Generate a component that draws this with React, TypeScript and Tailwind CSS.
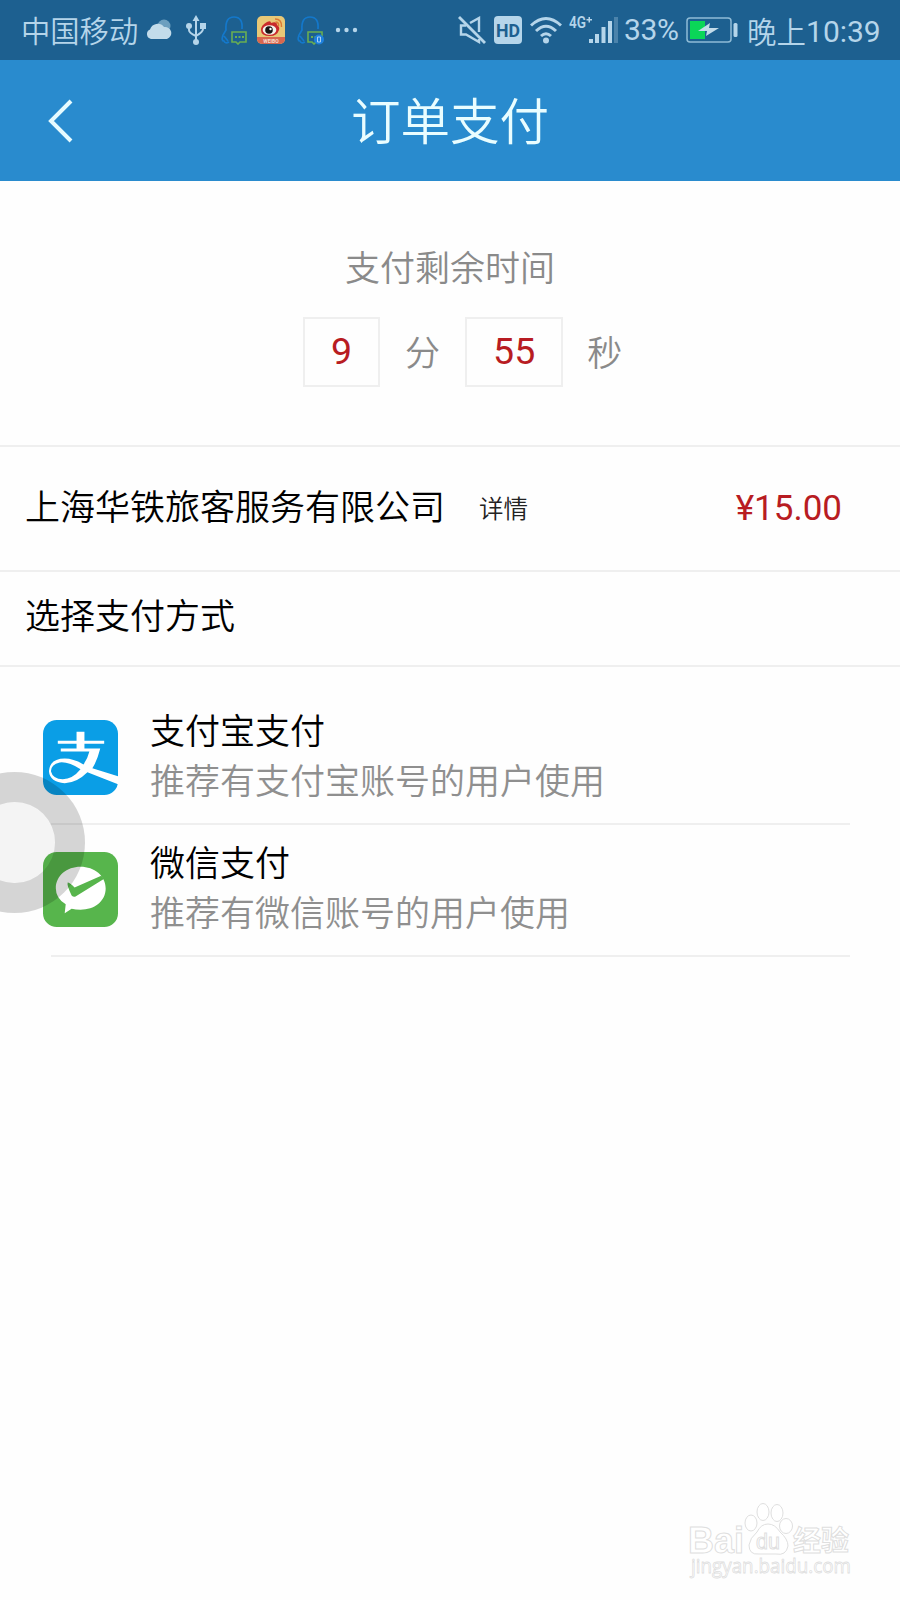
import type { ReactNode } from "react";

const StatusBar = () => {
  return (
    <div className="flex h-[60px] items-center bg-[#1d6090] text-[#b5d5ea]">
      <span className="ml-[21px] w-[118px] whitespace-nowrap text-[29.3px] leading-none font-[350]">
        中国移动
      </span>
      <svg className="ml-[7px]" width="26" height="22" viewBox="0 0 26 22">
        <circle cx="18" cy="7" r="6.500" fill="#6c9fbf" />
        <path
          d="M5 20a5 5 0 0 1-1-9.500a8 8 0 0 1 14-2.500a6.200 6.200 0 0 1 3 12z"
          fill="#c3dcea"
        />
      </svg>
      <svg className="ml-[14px]" width="20" height="30" viewBox="0 0 20 30">
        <g fill="none" stroke="#b5d5ea" strokeWidth="2">
          <path d="M10 4v22M3 11v4q0 3 7 6M17 11v3q0 3-7 7" />
        </g>
        <g fill="#b5d5ea">
          <path d="M10 0l3.500 6h-7zM14 8h6v6h-6z" />
          <circle cx="3" cy="11" r="3" />
          <circle cx="10" cy="27" r="3" />
        </g>
      </svg>
      <QQIcon className="ml-[15px]" />
      <svg className="ml-[9px]" width="28" height="28" viewBox="0 0 28 28">
        <rect width="28" height="28" rx="5" fill="#e8c877" />
        <path d="M0 21h28v2a5 5 0 0 1-5 5H5a5 5 0 0 1-5-5z" fill="#d8674f" />
        <path
          d="M4 14q0-5 6-8q4-2 4 1q6-2 6 2q3 2 2 5q-2 6-9 6q-9 0-9-6z"
          fill="#c92b2b"
        />
        <ellipse cx="12.500" cy="14" rx="6.800" ry="4.800" fill="#f5f2ea" />
        <circle cx="12" cy="14" r="3.800" fill="#151515" />
        <circle cx="13.500" cy="13" r="1.200" fill="#fff" />
        <path
          d="M18 3q7 0 6.500 8M18.500 6q3.500 0 3 4"
          fill="none"
          stroke="#dc7a35"
          strokeWidth="1.500"
        />
        <text
          className="font-[Roboto]"
          x="14"
          y="26.500"
          fontSize="5"
          fontWeight="700"
          textAnchor="middle"
          fill="#f6dcd0"
        >
          WEIBO
        </text>
      </svg>
      <QQIcon className="ml-[12px]" badge />
      <svg className="ml-[11px]" width="23" height="6" viewBox="0 0 23 6" fill="#b5d5ea">
        <circle cx="3" cy="3" r="2.200" />
        <circle cx="11.500" cy="3" r="2.200" />
        <circle cx="20" cy="3" r="2.200" />
      </svg>

      <div className="ml-auto flex h-full items-center">
        <svg width="28" height="28" viewBox="0 0 28 28" fill="none" stroke="#b5d5ea" strokeWidth="2.400">
          <path d="M1 1l26 26" strokeWidth="2.800" />
          <path d="M8 9.500H3v9h5l13 7.500v-3M12 7l9-5v14" />
        </svg>
        <svg className="ml-[8px]" width="28" height="28" viewBox="0 0 28 28">
          <rect width="28" height="28" rx="4" fill="#b5d5ea" />
          <text
            className="font-[Roboto]"
            x="14"
            y="20.500"
            fontSize="18"
            fontWeight="700"
            textAnchor="middle"
            textLength="24"
            lengthAdjust="spacingAndGlyphs"
            fill="#1d6090"
          >
            HD
          </text>
        </svg>
        <svg className="ml-[8px]" width="32" height="28" viewBox="0 0 32 28">
          <g fill="none" stroke="#b5d5ea" strokeWidth="3">
            <path d="M1 9.500q15-14 30 0M6 15q10-9.500 20 0M11 20q5-4.500 10 0" />
          </g>
          <circle cx="16" cy="24.500" r="3" fill="#b5d5ea" />
        </svg>
        <svg
          className="ml-[7px] overflow-visible"
          width="50"
          height="28"
          viewBox="0 0 50 28"
          fill="#b5d5ea"
        >
          <text
            className="font-[Roboto]"
            x="0"
            y="12"
            fontSize="16"
            fontWeight="600"
            textLength="17"
            lengthAdjust="spacingAndGlyphs"
          >
            4G
          </text>
          <path d="M17.500 3h2v-2h1.500v2h2v1.500h-2v2h-1.500v-2h-2z" />
          <path d="M20 23h4v4h-4zM26 18h4v9h-4zM32.500 11h4v16h-4zM39 5h4v22h-4z" />
          <path d="M45 1h4v26h-4z" opacity=".3" />
        </svg>
        <span className="ml-[5px] w-[54px] font-[Roboto] text-[30px] leading-none tracking-[-0.3px] whitespace-nowrap">
          33%
        </span>
        <svg className="ml-[8px]" width="52" height="26" viewBox="0 0 52 26">
          <rect x="1" y="1" width="44" height="24" rx="3" fill="none" stroke="#8fbbd6" strokeWidth="1.500" />
          <path d="M4 4h15v18H4z" fill="#0bd658" />
          <path d="M12 14l12-8l-1 5h10l-13 8l1-5z" fill="#c3dcea" />
          <rect x="47.500" y="6" width="4" height="14" rx="1.500" fill="#b5d5ea" />
        </svg>
        <span className="mr-[20px] ml-[9px] flex w-[133px] items-center pt-[1px] whitespace-nowrap">
          <span className="text-[29.500px] leading-none font-[350]">晚上</span>
          <span className="pt-[2px] font-[Roboto] text-[30px] leading-none">10:39</span>
        </span>
      </div>
    </div>
  );
};

const QQIcon = ({ className, badge }: { className: string; badge?: boolean }) => {
  return (
    <svg className={className} width="27" height="29" viewBox="0 0 27 29" fill="none">
      <path
        d="M8 26q-4 2-5-1q-3 0-1-6l3-5q-1-13 8-13t8 12M3 20l4 5"
        stroke="#1478cb"
        strokeWidth="1.700"
      />
      <path d="M11 16h14v10h-6l-2 2l-2-2h-4z" stroke="#6aae52" strokeWidth="1.600" />
      <path d="M14 21h2M17.500 21h2M21 21h2" stroke="#6aae52" strokeWidth="2" />
      {badge && (
        <>
          <circle cx="22" cy="23.500" r="5" fill="#1d80df" />
          <path d="M20.500 21h3v5h-3z" stroke="#a8d0f0" />
        </>
      )}
    </svg>
  );
};

const AlipayIcon = () => {
  return (
    <svg width="75" height="75" viewBox="0 0 76 76">
      <rect width="76" height="76" rx="14" fill="#0a9ee6" />
      <path
        d="M34 12h8v9h20v3H42v5h16q-3 12-8 20l26 8v8L45 53Q34 64 22 64Q7 63 6 52Q7 39 22 39q9 0 19 6q4-5 6-13H18v-3h16v-5H15v-3h19zM38 50Q26 42 17 43q-9 2-9 9q2 8 12 8q10 0 18-10z"
        fill="#fff"
        fillRule="evenodd"
      />
    </svg>
  );
};

const WechatIcon = () => {
  return (
    <svg width="75" height="75" viewBox="0 0 76 76">
      <rect width="76" height="76" rx="14" fill="#57b54c" />
      <path
        d="M38 15c14 0 25.500 9 25.500 22S52 58.500 38 58.500q-5 0-9-1l-7 4.500l1-9q-10-6-10-16c0-13 11-22 25-22z"
        fill="#fff"
      />
      <path d="M25 31q2 0 7 5l27-12l3 3l-29 18q-2 1-4-1q-5-10-4-13z" fill="#57b54c" />
    </svg>
  );
};

const PayMethod = ({ icon, name, hint }: { icon: ReactNode; name: string; hint: string }) => {
  return (
    <div className="flex h-[132px]">
      <div className="ml-[43px] pt-[29px]">{icon}</div>
      <div className="ml-[32px] pt-[13px] text-[35px] leading-[50px] font-[350] whitespace-nowrap">
        <p className="text-black">{name}</p>
        <p className="text-[#8f8f8f]">{hint}</p>
      </div>
    </div>
  );
};

const TimeBox = ({ value }: { value: string }) => {
  return (
    <div className="flex h-[70px] items-center justify-center border-2 border-[#efefef] px-[26px] pb-[2px] font-[Roboto] text-[37.500px] font-normal text-[#b81c22]">
      {value}
    </div>
  );
};

const Watermark = () => {
  return (
    <svg
      className="absolute right-[45px] bottom-[13px] overflow-visible font-['Open_Sans']"
      width="170"
      height="84"
      viewBox="0 0 170 84"
      fill="#fff"
      stroke="#dfdfdf"
      strokeWidth="1"
    >
      <text
        className="font-['Liberation_Sans']"
        x="3"
        y="50"
        fontSize="36"
        fontWeight="700"
        textLength="56"
        lengthAdjust="spacingAndGlyphs"
      >
        Bai
      </text>
      <ellipse cx="66" cy="20" rx="6" ry="8" />
      <ellipse cx="78" cy="9" rx="6" ry="8.500" />
      <ellipse cx="92" cy="10" rx="6" ry="8.500" />
      <ellipse cx="101" cy="23" rx="6.500" ry="7.500" />
      <path d="M83 21q7 0 12 8q8 7 8 14q-2 10-12 8h-17q-10 1-10-9q1-7 8-13q4-8 11-8z" />
      <text
        className="font-['Liberation_Sans']"
        x="71"
        y="46"
        fontSize="22"
        textLength="24"
        lengthAdjust="spacingAndGlyphs"
      >
        du
      </text>
      <text className="font-['Noto_Sans_CJK_SC']" x="108" y="48" fontSize="28" fontWeight="700">
        经验
      </text>
      <text
        x="6"
        y="70"
        fontSize="20"
        textLength="160"
        lengthAdjust="spacingAndGlyphs"
        strokeWidth="0.8"
      >
        jingyan.baidu.com
      </text>
    </svg>
  );
};

export default function App() {
  return (
    <div className="relative h-[1600px] w-[900px] overflow-hidden bg-[#fefefe] font-['Noto_Sans_CJK_SC',sans-serif]">
      <StatusBar />
      <header className="flex h-[121px] items-center bg-[#298bce]">
        <svg className="ml-[47px]" width="28" height="44" viewBox="0 0 28 44">
          <path d="M24 2L4 22L24 42" fill="none" stroke="#e6fbff" strokeWidth="4" />
        </svg>
        <h1 className="ml-[276px] pb-[4px] text-[49.500px] leading-none font-[350] text-[#e9fdff]">
          订单支付
        </h1>
      </header>

      <section className="h-[264px] pt-[60px]">
        <p className="text-center text-[35px] leading-[50px] font-[350] text-[#8a8a8a]">
          支付剩余时间
        </p>
        <div className="mt-[26px] ml-[303px] flex items-center text-[35px] leading-[50px] font-[350] text-[#8a8a8a]">
          <TimeBox value="9" />
          <span className="mx-[25px] pb-[2px]">分</span>
          <TimeBox value="55" />
          <span className="ml-[24px] pb-[2px]">秒</span>
        </div>
      </section>

      <section className="flex h-[125px] items-center border-t-[2px] border-[#efefef] pl-[25px]">
        <span className="pb-[6px] text-[35px] font-[350] text-black">上海华铁旅客服务有限公司</span>
        <span className="ml-[34px] text-[24.500px] font-[350] text-[#222]">详情</span>
        <span className="mr-[58px] ml-auto pt-[1px] font-[Roboto] text-[35px] text-[#b81c22]">
          ¥15.00
        </span>
      </section>
      <section className="h-[97px] border-y-[2px] border-[#efefef] pt-[17px] pl-[25px] text-[35px] leading-[50px] font-[350] text-black">
        选择支付方式
      </section>

      <div className="pt-[24px]">
        <PayMethod icon={<AlipayIcon />} name="支付宝支付" hint="推荐有支付宝账号的用户使用" />
        <div className="mr-[50px] ml-[51px] h-[2px] bg-[#efefef]" />
        <div className="-mt-[2px]">
          <PayMethod icon={<WechatIcon />} name="微信支付" hint="推荐有微信账号的用户使用" />
        </div>
        <div className="mr-[50px] ml-[51px] h-[2px] bg-[#efefef]" />
      </div>

      {/* floating assistive button, half off the left edge */}
      <div className="absolute top-[772px] left-[-56px] size-[141px] rounded-full border-[30px] border-black/16 bg-black/4 bg-clip-padding" />
      <Watermark />
    </div>
  );
}
